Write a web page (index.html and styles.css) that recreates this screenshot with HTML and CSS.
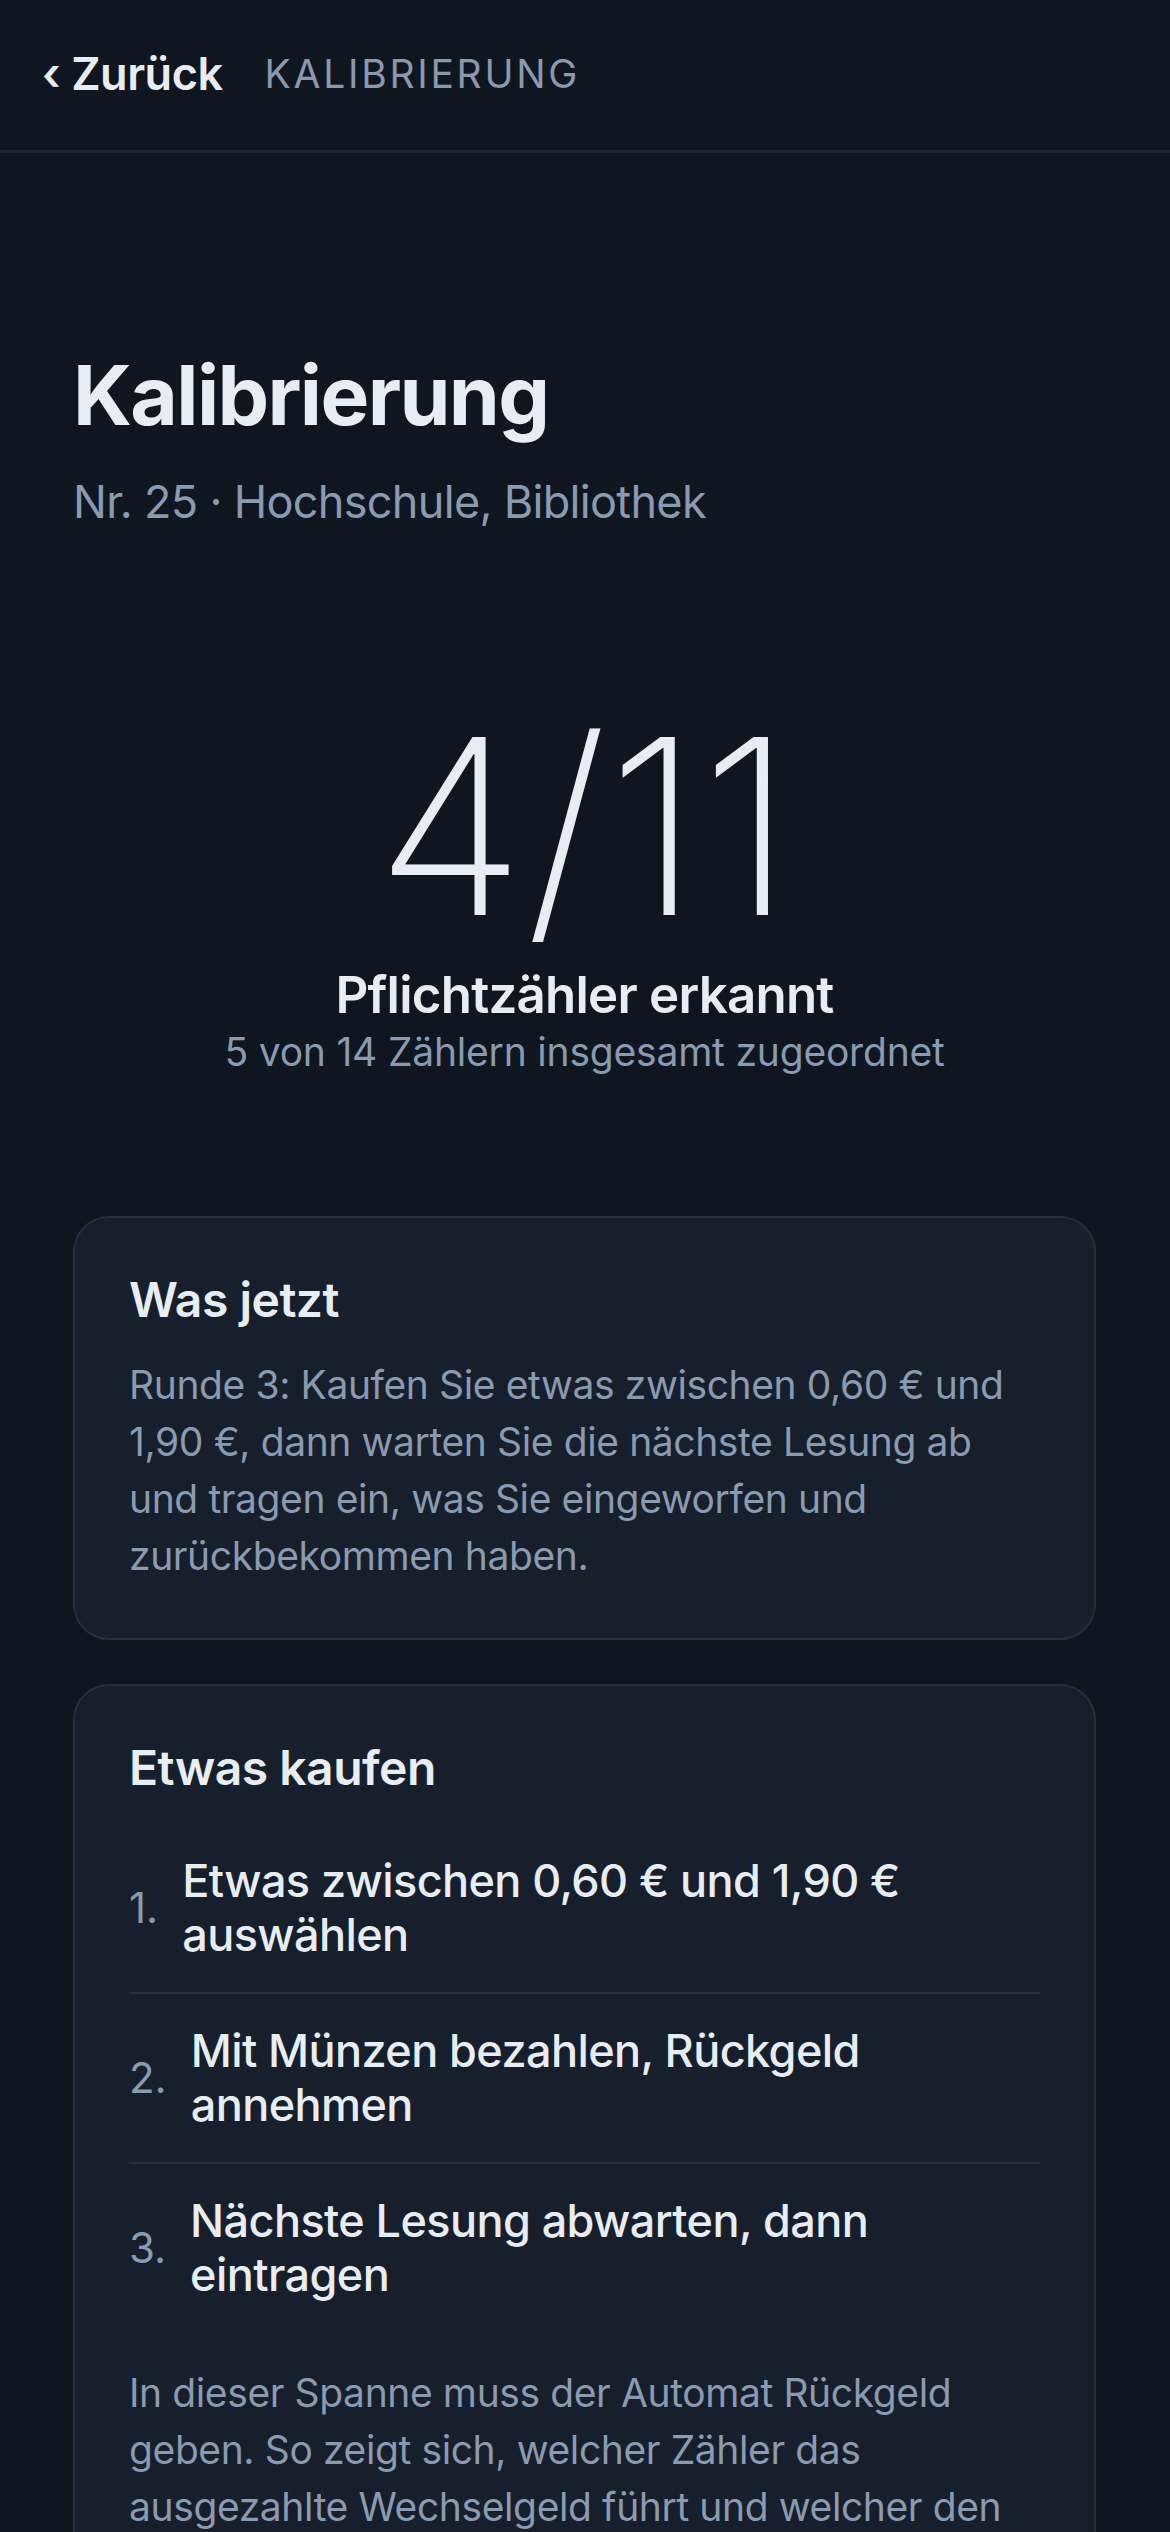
FILE: index.html
```html
<!DOCTYPE html>
<html lang="de">
<head>
  <meta charset="UTF-8">
  <meta name="viewport" content="width=device-width, initial-scale=1.0">
  <title>Kalibrierung</title>
  <link rel="stylesheet" href="styles.css">
</head>
<body>
  <header class="topbar">
    <a class="back-link" href="#">‹ Zurück</a>
    <span class="topbar-title">KALIBRIERUNG</span>
  </header>

  <main class="page">
    <h1 class="page-title">Kalibrierung</h1>
    <p class="page-sub">Nr. 25 · Hochschule, Bibliothek</p>

    <!-- Fortschritt -->
    <section class="progress">
      <div class="progress-count">4/11</div>
      <div class="progress-label">Pflichtzähler erkannt</div>
      <div class="progress-note">5 von 14 Zählern insgesamt zugeordnet</div>
    </section>

    <section class="card">
      <h2 class="card-title">Was jetzt</h2>
      <p class="card-text">Runde 3: Kaufen Sie etwas zwischen 0,60 € und 1,90 €, dann warten Sie die nächste Lesung ab und tragen ein, was Sie eingeworfen und zurückbekommen haben.</p>
    </section>

    <section class="card">
      <h2 class="card-title">Etwas kaufen</h2>
      <ol class="steps">
        <li class="step"><span class="step-num">1.</span><span class="step-text">Etwas zwischen 0,60 € und 1,90 € auswählen</span></li>
        <li class="step"><span class="step-num">2.</span><span class="step-text">Mit Münzen bezahlen, Rückgeld annehmen</span></li>
        <li class="step"><span class="step-num">3.</span><span class="step-text">Nächste Lesung abwarten, dann eintragen</span></li>
      </ol>
      <p class="card-text">In dieser Spanne muss der Automat Rückgeld geben. So zeigt sich, welcher Zähler das ausgezahlte Wechselgeld führt und welcher den eingeworfenen Betrag zählt.</p>
    </section>
  </main>
</body>
</html>
```

FILE: styles.css
```css
/* Grundlayout */
* {
  box-sizing: border-box;
}
body {
  margin: 0;
  background-color: #0f1620;
  color: #e8edf4;
  font-family: Inter, "Noto Sans", sans-serif;
}

/* Kopfzeile */
.topbar {
  height: 153px;
  display: flex;
  align-items: center;
  gap: 42px;
  padding: 0 0 3px 42px;
  border-bottom: 3px solid #1f2935;
}
.back-link {
  color: #e8edf4;
  text-decoration: none;
  font-size: 45px;
  font-weight: 600;
  letter-spacing: -0.01em;
}
.topbar-title {
  color: #8a99ae;
  font-size: 39px;
  letter-spacing: 0.07em;
}

/* Inhalt */
.page {
  padding: 194px 74px 0 73px;
}
.page-title {
  margin: 0;
  font-size: 82px;
  font-weight: 700;
  line-height: 1.2;
  letter-spacing: -0.02em;
}
.page-sub {
  margin: 28px 0 0;
  font-size: 45px;
  line-height: 1.3;
  letter-spacing: -0.015em;
  color: #8a9ab0;
}

/* Zähler */
.progress {
  margin-top: 172px;
  text-align: center;
}
.progress-count {
  font-size: 245px;
  font-weight: 200;
  line-height: 1;
  letter-spacing: 0;
}
.progress-label {
  margin-top: 15px;
  font-size: 51px;
  font-weight: 600;
  line-height: 1.2;
  letter-spacing: -0.015em;
}
.progress-note {
  margin-top: 2px;
  font-size: 39px;
  line-height: 1.3;
  letter-spacing: -0.005em;
  color: #8a9ab0;
}

/* Karten */
.card {
  margin-top: 44px;
  background-color: #161f2b;
  border: 2px solid #243040;
  border-radius: 36px;
  padding: 52px 54px 54px;
}
.progress + .card {
  margin-top: 138px;
}
.card-title {
  margin: 0 0 26px;
  font-size: 48px;
  font-weight: 600;
  line-height: 1.25;
  letter-spacing: -0.01em;
}
.card-text {
  margin: 0;
  font-size: 39px;
  line-height: 57px;
  letter-spacing: -0.01em;
  color: #8a9ab0;
}

/* Schritte */
.steps {
  list-style: none;
  margin: 0 0 32px;
  padding: 0;
}
.step {
  display: flex;
  align-items: center;
  gap: 24px;
  padding: 30px 0;
  border-bottom: 2px solid #243040;
}
.step:last-child {
  border-bottom: none;
}
.step-num {
  font-size: 42px;
  color: #8a9ab0;
}
.step-text {
  font-size: 45px;
  font-weight: 500;
  line-height: 54px;
  letter-spacing: -0.013em;
}
```
